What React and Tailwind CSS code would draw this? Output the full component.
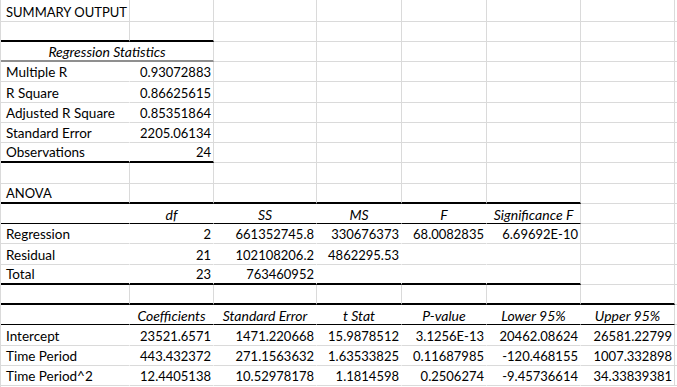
import React from "react";

const W = {
  A: "w-[129px]",
  AB: "w-[213px]",
  B: "w-[84px]",
  C: "w-[103px]",
  D: "w-[85px]",
  E: "w-[85px]",
  F: "w-[94px]",
  G: "w-[94px]",
  H: "w-[60px]",
};

const BOTTOM = {
  grid: "border-b border-b-[#dadada]",
  thick: "border-b-2 border-b-black",
  thin: "border-b border-b-black",
  gray: "border-b-2 border-b-[#8f8f8f]",
};

const ALIGN = {
  l: "justify-start pl-[5px]",
  L: "justify-start pl-[5px] text-[13.5px]",
  r: "justify-end pr-[2px]",
  c: "justify-center",
};

const COLS = ["A", "B", "C", "D", "E", "F", "G", "H"];

function Cell({ col, text = "", align = "l", italic = false, b = "grid", hide = false }) {
  return (
    <div
      className={`${W[col]} h-full shrink-0 flex items-end whitespace-nowrap border-r ${
        hide ? "border-r-white" : "border-r-[#dadada]"
      } ${BOTTOM[b]} ${ALIGN[align]} ${italic ? "italic text-[14px] pb-[1px]" : "pb-[1px]"}`}
    >
      <span className="leading-[15px]">{text}</span>
    </div>
  );
}

function Row({ first = false, children }) {
  return <div className={`flex ${first ? "h-[21.5px]" : "h-[20.28px]"}`}>{children}</div>;
}

function EmptyRow({ bottom = {} }) {
  return (
    <Row>
      {COLS.map((c) => (
        <Cell key={c} col={c} b={bottom[c] || "grid"} />
      ))}
    </Row>
  );
}

function TRow({ cells, last, b = "grid" }) {
  const idx = COLS.indexOf(last);
  return (
    <Row>
      {COLS.map((c, i) => {
        if (i <= idx) {
          const cell = cells[i] || {};
          return (
            <Cell
              key={c}
              col={c}
              text={cell.t}
              align={cell.a || (i === 0 ? "L" : "r")}
              italic={cell.i}
              b={b}
              hide={i < idx}
            />
          );
        }
        return <Cell key={c} col={c} />;
      })}
    </Row>
  );
}

const h = (t) => ({ t, a: "c", i: true });
const l = (t) => ({ t, a: "L" });
const r = (t) => ({ t, a: "r" });

export default function App() {
  return (
    <div className="w-[677px] h-[387px] overflow-hidden bg-white text-black text-[13px] font-['Lato',sans-serif]">
      <div className="border-l border-l-[#dadada] h-full">
        <Row first>
          <Cell col="A" text="SUMMARY OUTPUT" />
          {COLS.slice(1).map((c) => (
            <Cell key={c} col={c} />
          ))}
        </Row>
        <EmptyRow bottom={{ A: "thick", B: "thick" }} />
        <Row>
          <Cell col="AB" text="Regression Statistics" align="c" italic b="gray" />
          {COLS.slice(2).map((c) => (
            <Cell key={c} col={c} />
          ))}
        </Row>
        <TRow last="B" cells={[l("Multiple R"), r("0.93072883")]} />
        <TRow last="B" cells={[l("R Square"), r("0.86625615")]} />
        <TRow last="B" cells={[l("Adjusted R Square"), r("0.85351864")]} />
        <TRow last="B" cells={[l("Standard Error"), r("2205.06134")]} />
        <TRow last="B" b="thick" cells={[l("Observations"), r("24")]} />
        <EmptyRow />
        <Row>
          <Cell col="A" text="ANOVA" b="thick" />
          {COLS.slice(1).map((c, i) => (
            <Cell key={c} col={c} b={i < 5 ? "thick" : "grid"} />
          ))}
        </Row>
        <TRow last="F" b="thin" cells={[{}, h("df"), h("SS"), h("MS"), h("F"), h("Significance F")]} />
        <TRow
          last="F"
          cells={[l("Regression"), r("2"), r("661352745.8"), r("330676373"), r("68.0082835"), r("6.69692E-10")]}
        />
        <TRow last="F" cells={[l("Residual"), r("21"), r("102108206.2"), r("4862295.53")]} />
        <TRow last="F" b="thick" cells={[l("Total"), r("23"), r("763460952")]} />
        <Row>
          {COLS.map((c, i) => (
            <Cell key={c} col={c} b={i < 7 ? "thick" : "grid"} />
          ))}
        </Row>
        <TRow
          last="G"
          b="thin"
          cells={[{}, h("Coefficients"), h("Standard Error"), h("t Stat"), h("P-value"), h("Lower 95%"), h("Upper 95%")]}
        />
        <TRow
          last="G"
          cells={[
            l("Intercept"),
            r("23521.6571"),
            r("1471.220668"),
            r("15.9878512"),
            r("3.1256E-13"),
            r("20462.08624"),
            r("26581.22799"),
          ]}
        />
        <TRow
          last="G"
          cells={[
            l("Time Period"),
            r("443.432372"),
            r("271.1563632"),
            r("1.63533825"),
            r("0.11687985"),
            r("-120.468155"),
            r("1007.332898"),
          ]}
        />
        <TRow
          last="G"
          cells={[
            l("Time Period^2"),
            r("12.4405138"),
            r("10.52978178"),
            r("1.1814598"),
            r("0.2506274"),
            r("-9.45736614"),
            r("34.33839381"),
          ]}
        />
      </div>
    </div>
  );
}
